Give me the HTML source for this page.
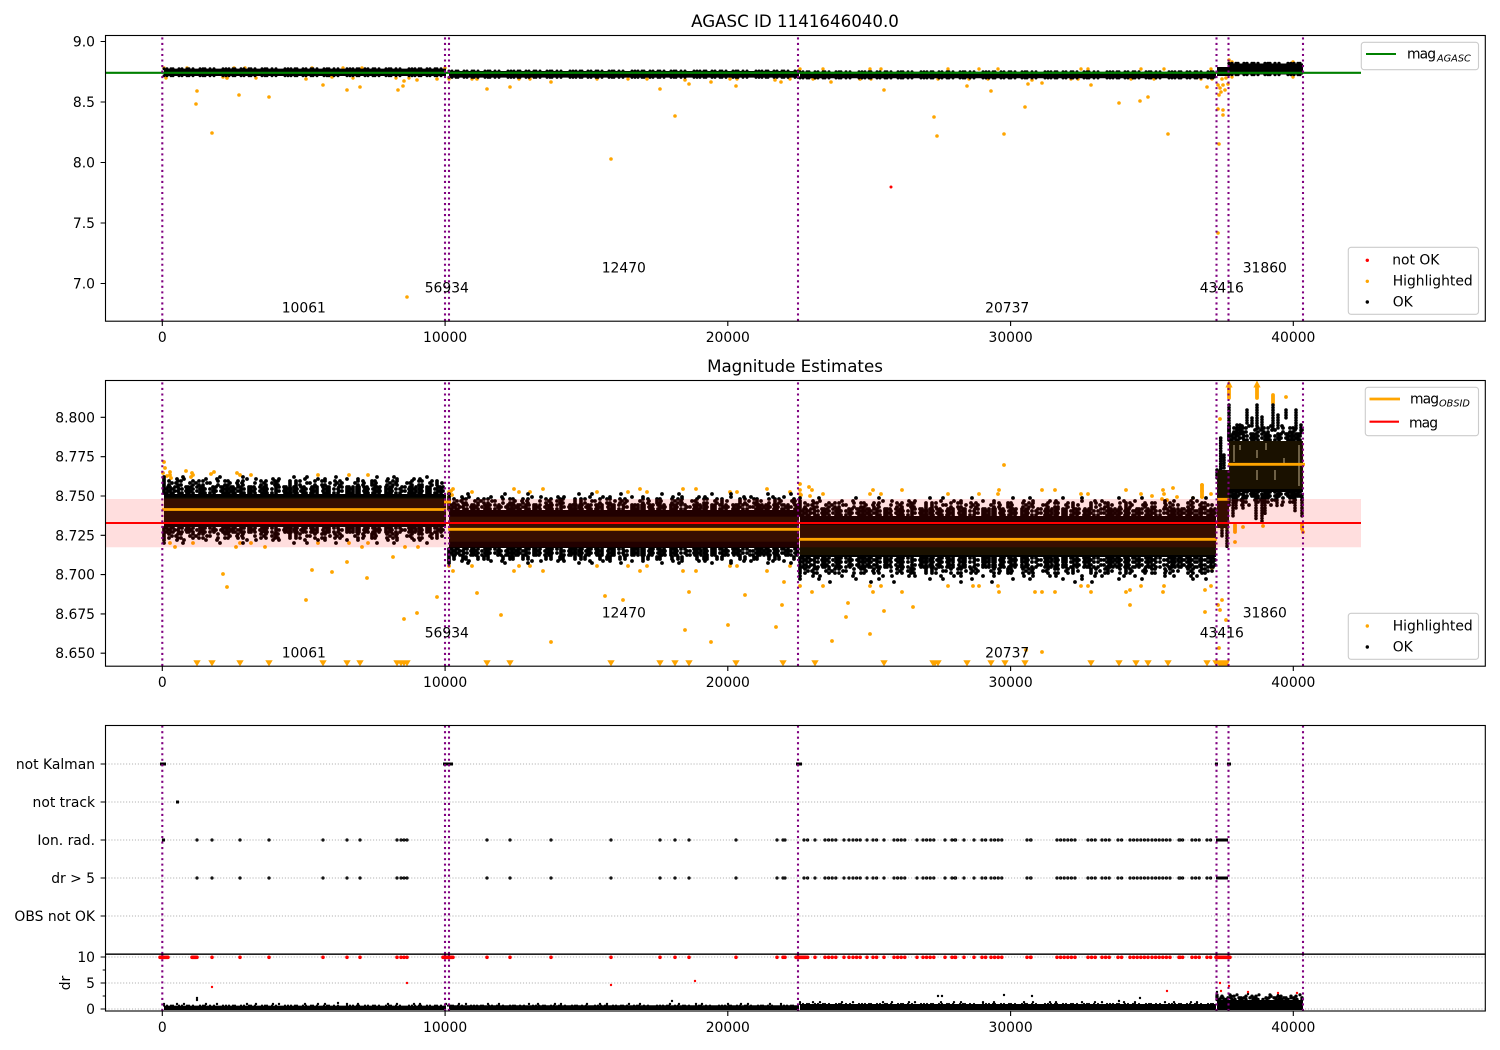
<!DOCTYPE html>
<html><head><meta charset="utf-8"><title>AGASC ID 1141646040.0</title>
<style>
html,body{margin:0;padding:0;background:#fff}
svg{display:block}
text{font-family:"DejaVu Sans",sans-serif;font-size:13.89px;fill:#000}
.t{font-size:16.67px;text-anchor:middle}
.s{font-size:9.72px;font-style:italic}
.q{letter-spacing:-.9px}
.r{text-anchor:end}.m{text-anchor:middle}
path,line{fill:none}
.f{fill:#ffa500;stroke:#ffa500;stroke-width:1}
.k{stroke:#000;stroke-linecap:round}
.b{stroke:#000}
.o{stroke:#ffa500;stroke-linecap:round}
.a{stroke-dasharray:0 3 0 4 0 2 0 6 0 3 0 5 0 2 0 4 0 7 0 3 0 2 0 5 0 4 0 9 0 3}
.a2{stroke-dasharray:0 4 0 2 0 5 0 3 0 8 0 2 0 3 0 6 0 4 0 2 0 10 0 3 0 5 0 2 0 4}
.b1{stroke-dasharray:0 5 0 9 0 3 0 12 0 6 0 4 0 15 0 7 0 3 0 10 0 5 0 18}
.b2{stroke-dasharray:0 8 0 4 0 14 0 6 0 11 0 3 0 20 0 7 0 5 0 13 0 9}
.c1{stroke-dasharray:0 13 0 7 0 22 0 11 0 30 0 9 0 17 0 6 0 26}
.c2{stroke-dasharray:0 19 0 37 0 23 0 51 0 13 0 29 0 41 0 17 0 33}
.e{stroke-dasharray:0 41 0 23 0 67 0 31 0 83 0 17 0 53}
.o1{stroke-dasharray:0 23 0 47 0 11 0 67 0 31 0 19 0 83 0 7 0 53}
.o2{stroke-dasharray:0 61 0 29 0 97 0 43 0 13 0 71 0 37}
.v{stroke:#800080;stroke-width:2.08;stroke-dasharray:2.08 3.44}
.g{stroke:#b0b0b0;stroke-width:1.11;stroke-dasharray:1.11 1.83}
.sp{fill:none;stroke:#000;stroke-width:1.11}
.tk{stroke:#000;stroke-width:1.11}
.lg{fill:#fff;fill-opacity:.8;stroke:#ccc;stroke-width:1.11}
.ch{stroke-dasharray:0 3.6}
.bd{stroke-dasharray:0 2.6}
</style></head><body>
<svg width="1500" height="1050" viewBox="0 0 1500 1050" xmlns="http://www.w3.org/2000/svg">
<defs>
<g id="ev" fill="none" stroke-linecap="round">
<path d="M197 0h0M212 0h0M240 0h0M269 0h0M323 0h0M347 0h0M360 0h0M397 0h0M401 0h0M404 0h0M407 0h0M487 0h0M510 0h0M551 0h0M611 0h0M660 0h0M675 0h0M689 0h0M736 0h0M777 0h0M783 0h0M785 0h0M815 0h0M844 0h0M849 0h0M867 0h0M884 0h0M917 0h0M945 0h0M955 0h0M964 0h0M974 0h0M1031 0h0M1180 0h0"/>
<path class="ch" d="M804 0H810M825 0H839M853 0H863M873 0H878M894 0H907M923 0H937M952 0H958M982 0H986M991 0H1005M1027 0H1034M1057 0H1075M1088 0H1097M1102 0H1112M1118 0H1125M1130 0H1148M1152 0H1172M1179 0H1186M1192 0H1202M1207 0H1212"/>
</g>
</defs>

<!-- PANEL 1 -->
<text class="t" x="795" y="27">AGASC ID 1141646040.0</text>
<path class="o" stroke-width="3.6" d="M197 91h0M196 104h0M212 133h0M239 95h0M269 97h0M306 79h0M323 85h0M347 90h0M360 87h0M398 90h0M403 86h0M404 81h0M417 80h0M437 79h0M487 89h0M223 77h0M227 78h0M332 77h0M477 79h0M407 297h0M510 87h0M551 82h0M611 159h0M660 89h0M675 116h0M685 80h0M689 84h0M711 82h0M736 86h0M775 80h0M781 82h0M815 78h0M831 82h0M860 79h0M884 90h0M934 117h0M937 136h0M967 86h0M991 91h0M1004 134h0M1025 107h0M1028 84h0M1032 80h0M1042 83h0M1091 85h0M1119 103h0M1140 101h0M1148 97h0M1168 134h0M1207 87h0M1219 144h0M1218 109h0M1223 110h0M1223 115h0M1221 92h0M1218 85h0M1223 85h0M1228 84h0M1222 79h0M1229 60h0M1218 233h0M1220 88h0M1225 90h0M1219 95h0M1226 78h0"/>
<path class="o o1" stroke-width="3.4" d="M164 68H446M449 79H1216M800 69H1216"/>
<path class="o o2" stroke-width="3.4" d="M166 78H446M1232 62H1300M1232 77H1300"/>
<path d="M164 72.3H446" stroke="#000" stroke-width="7.4"/>
<path d="M449 74.3H799" stroke="#000" stroke-width="6.6"/>
<path d="M800 75H1216" stroke="#000" stroke-width="6.6"/>
<path d="M1217 71.5H1229" stroke="#000" stroke-width="9"/>
<path d="M1229 69H1303" stroke="#000" stroke-width="11"/>
<path class="k a" stroke-width="3" d="M164 68.8H446M164 75.8H446M449 71H799M449 77.4H799M800 71.8H1216M800 78H1216"/>
<path class="k a" stroke-width="3.4" d="M1229 63.5H1303M1229 74.5H1303"/>
<path stroke="#008000" stroke-width="2.08" d="M105 72.8H1361"/>
<path class="k" style="stroke:#f00" stroke-width="3" d="M891 187h0"/>
<g class="v"><path d="M162.3 321V35.5M445 321V35.5M449 321V35.5M798 321V35.5M1216.5 321V35.5M1228.5 321V35.5M1303 321V35.5"/></g>
<rect class="sp" x="105.5" y="35.5" width="1379.8" height="285.7"/>
<g class="tk"><path d="M162.3 321v5M445.1 321v5M727.8 321v5M1010.6 321v5M1293.3 321v5M100.6 41.5h5M100.6 102h5M100.6 162.5h5M100.6 223h5M100.6 283.5h5"/></g>
<text class="r" x="95" y="46.5">9.0</text><text class="r" x="95" y="107">8.5</text><text class="r" x="95" y="167.5">8.0</text><text class="r" x="95" y="228">7.5</text><text class="r" x="95" y="288.5">7.0</text>
<text class="m" x="162.3" y="342">0</text><text class="m" x="445.1" y="342">10000</text><text class="m" x="727.8" y="342">20000</text><text class="m" x="1010.6" y="342">30000</text><text class="m" x="1293.3" y="342">40000</text>
<text class="m" x="303.8" y="312.5">10061</text><text class="m" x="446.8" y="292.5">56934</text><text class="m" x="623.8" y="272.5">12470</text><text class="m" x="1007.2" y="312.5">20737</text><text class="m" x="1221.8" y="292.5">43416</text><text class="m" x="1264.8" y="272.5">31860</text>
<rect class="lg" x="1361.3" y="42.3" width="117.2" height="27.4" rx="2.8"/>
<path stroke="#008000" stroke-width="2.08" d="M1366 54H1396"/>
<text class="q" x="1407" y="58.5">mag</text><text class="s" x="1437" y="61.5">AGASC</text>
<rect class="lg" x="1348.3" y="247.3" width="130.2" height="67" rx="2.8"/>
<circle cx="1367.3" cy="260.3" r="1.7" fill="#f00"/><circle cx="1367.3" cy="281.3" r="1.7" fill="#ffa500"/><circle cx="1367.3" cy="302" r="1.7" fill="#000"/>
<text x="1392.2" y="264.5">not OK</text><text x="1392.7" y="285.5">Highlighted</text><text x="1392.7" y="306.5">OK</text>

<!-- PANEL 2 -->
<text class="t" x="795" y="372">Magnitude Estimates</text>
<!-- orange points -->
<path class="o" stroke-width="3.8" d="M223 574h0M227 587h0M306 600h0M312 570h0M332 572h0M347 562h0M367 578h0M393 557h0M404 619h0M417 613h0M437 597h0M477 593h0M501 615h0M551 642h0M605 596h0M623 600h0M685 630h0M689 592h0M711 642h0M728 625h0M745 595h0M776 627h0M782 605h0M784 582h0M832 641h0M846 617h0M848 603h0M870 634h0M884 611h0M913 607h0M973 586h0M1004 465h0M1026 650h0M1042 652h0M1035 592h0M1091 592h0M1130 590h0M1130 605h0M1205 590h0M1212 568h0M1205 612h0M1219 648h0M164 462h0M165 468h0M163 473h0M167 476h0M170 472h0M171 478h0M186 471h0M192 473h0M191 477h0M211 474h0M214 472h0M237 473h0M1173 488h0M1177 497h0M1202 485h0M1202 491h0M1202 497h0M1152 496h0M1162 499h0M1167 500h0M1193 498h0M451 491h0M452 495h0M449 497h0M800 484h0M800 490h0M801 495h0M809 487h0M810 496h0M1220 419h0M1286 397h0M1243 527h0M1263 526h0M1303 532h0M1235 542h0M1220 610h0M1222 600h0M1226 620h0M1218 605h0"/>
<path class="o" stroke-width="3.8" d="M1229 388V398M1257 388V398M1273 395V403M1235 525V532M1302 525V529M1202 485V497"/>
<path class="f" d="M1226.2 387h5.6l-2.8-5.5zM1254.2 387h5.6l-2.8-5.5z"/>
<path class="f" d="M194.2 660.8h5.6l-2.8 4.6zM209.2 660.8h5.6l-2.8 4.6zM237.2 660.8h5.6l-2.8 4.6zM266.2 660.8h5.6l-2.8 4.6zM320.2 660.8h5.6l-2.8 4.6zM344.2 660.8h5.6l-2.8 4.6zM357.2 660.8h5.6l-2.8 4.6zM394.2 660.8h5.6l-2.8 4.6zM398.2 660.8h5.6l-2.8 4.6zM401.2 660.8h5.6l-2.8 4.6zM404.2 660.8h5.6l-2.8 4.6zM484.2 660.8h5.6l-2.8 4.6zM507.2 660.8h5.6l-2.8 4.6zM608.2 660.8h5.6l-2.8 4.6zM657.2 660.8h5.6l-2.8 4.6zM672.2 660.8h5.6l-2.8 4.6zM686.2 660.8h5.6l-2.8 4.6zM733.2 660.8h5.6l-2.8 4.6zM780.2 660.8h5.6l-2.8 4.6zM812.2 660.8h5.6l-2.8 4.6zM881.2 660.8h5.6l-2.8 4.6zM930.2 660.8h5.6l-2.8 4.6zM932.2 660.8h5.6l-2.8 4.6zM935.2 660.8h5.6l-2.8 4.6zM964.2 660.8h5.6l-2.8 4.6zM988.2 660.8h5.6l-2.8 4.6zM1002.2 660.8h5.6l-2.8 4.6zM1022.2 660.8h5.6l-2.8 4.6zM1088.2 660.8h5.6l-2.8 4.6zM1116.2 660.8h5.6l-2.8 4.6zM1133.2 660.8h5.6l-2.8 4.6zM1145.2 660.8h5.6l-2.8 4.6zM1165.2 660.8h5.6l-2.8 4.6zM1204.2 660.8h5.6l-2.8 4.6zM1213.2 660.8h5.6l-2.8 4.6zM1217 660.8h12l-2 4.6h-8z"/>
<path class="o o1" stroke-width="3.8" d="M170 475H446M170 543H446M449 492H799M449 566H799M800 494H1216M800 586H1216"/>
<path class="o o2" stroke-width="3.8" d="M175 547H446M453 489H799M453 571H799M812 490H1216M812 592H1216"/>
<!-- black scatter: seg 1 -->
<rect x="164" y="494" width="282" height="33" fill="#000"/>
<g class="k" stroke-width="3.8">
<path class="a" d="M164 493H446M164 528H446"/>
<path class="a2" d="M164 491H446M164 530H446"/>
<path class="a" d="M164 489H446M164 532H446"/>
<path class="a2" d="M164 487H446"/>
<path class="b1" d="M164 485H446M164 534H446"/>
<path class="b2" d="M164 483H446M164 536H446"/>
<path class="b1" d="M164 481H446M164 538H446"/>
<path class="c1" d="M164 479H446M164 540H446"/>
<path class="c2" d="M164 477H446M164 543H446"/>
<!-- seg 2 -->
<path class="a" d="M449 509H799M449 549H799"/>
<path class="a2" d="M449 507H799M449 551H799"/>
<path class="a" d="M449 505H799M449 553H799"/>
<path class="a2" d="M449 555H799"/>
<path class="b1" d="M449 503H799M449 557H799"/>
<path class="b2" d="M449 501H799"/>
<path class="b1" d="M449 499H799M449 559H799"/>
<path class="c1" d="M449 497H799M449 561H799"/>
<path class="c2" d="M449 494H799M449 563H799"/>
<!-- seg 3 -->
<path class="a" d="M800 515H1216M800 558H1216"/>
<path class="a2" d="M800 513H1216M800 560H1216"/>
<path class="a" d="M800 511H1216M800 562H1216"/>
<path class="a2" d="M800 509H1216M800 565H1216"/>
<path class="a" d="M800 567H1216"/>
<path class="b1" d="M800 507H1216M800 569H1216"/>
<path class="b2" d="M800 505H1216M800 571H1216"/>
<path class="b1" d="M800 503H1216M800 573H1216"/>
<path class="c1" d="M800 501H1216M800 576H1216"/>
<path class="c2" d="M800 498H1216M800 579H1216"/>
<path class="e" d="M830 582H1120"/>
<!-- seg 5 edges -->
<path class="a" d="M1229 440H1303M1229 492H1303"/>
<path class="a2" d="M1229 438H1303M1229 494H1303"/>
<path class="a" d="M1229 436H1303M1229 496H1303"/>
<path class="a2" d="M1229 434H1303"/>
<path class="b1" d="M1229 432H1303M1229 498H1303"/>
<path class="b2" d="M1229 430H1303M1229 500H1303"/>
<path class="b1" d="M1229 428H1303M1229 502H1303"/>
<path class="c1" d="M1229 426H1303M1229 505H1303"/>
</g>
<rect x="449" y="510" width="350" height="38" fill="#000"/>
<rect x="800" y="516" width="416" height="41" fill="#000"/>
<rect x="1217" y="470" width="12" height="58" fill="#000"/>
<path class="k bd" stroke-width="3.6" d="M1220.7 438V470M1224 455V470M1227 528V548M1222 528V538M1217 470V480"/>
<rect x="1229" y="441" width="74" height="51" fill="#000"/>
<path class="k bd" stroke-width="3.6" d="M1229 405V440M1237 425V435M1240 425V435M1247 410V425M1252 418V428M1257 405V430M1262 417V430M1273 405V430M1278 415V430M1286 410V418M1296 410V430M1301 425V435M1233 495V518M1236 495V510M1243 495V508M1256 495V520M1262 495V522M1265 495V515M1277 495V507M1295 495V512M1302 495V518"/>
<path stroke="#eadfc4" stroke-width=".8" d="M1234 445V462M1257 450V458M1257 470V480M1266 443V450M1284 458V464M1275 470V480M1240 445V450M1299 445V486"/>
<!-- orange alpha bands -->
<g fill="#ffa500" fill-opacity=".1">
<rect x="162" y="497.7" width="284" height="25.3"/>
<rect x="446" y="490" width="3" height="25"/>
<rect x="449" y="516.7" width="350" height="25"/>
<rect x="799.5" y="525" width="417.5" height="30"/>
<rect x="1217" y="470" width="12" height="60"/>
<rect x="1229" y="441" width="75" height="48"/>
</g>
<!-- pink band -->
<rect x="105" y="499" width="1256" height="48.3" fill="#f00" fill-opacity=".13"/>
<path stroke="#f00" stroke-width="2.08" d="M105 523H1361"/>
<path stroke="#ffa500" stroke-width="2.78" d="M162 509.5H446M444 502H451M448 529.3H800M799 539.3H1217M1217 499.3H1229.5M1228 464.3H1305"/>
<g class="v"><path d="M162.3 666V380.5M445 666V380.5M449 666V380.5M798 666V380.5M1216.5 666V380.5M1228.5 666V380.5M1303 666V380.5"/></g>
<rect class="sp" x="105.5" y="380.5" width="1379.8" height="285.7"/>
<g class="tk"><path d="M162.3 666v5M445.1 666v5M727.8 666v5M1010.6 666v5M1293.3 666v5M100.6 417.3h5M100.6 456.7h5M100.6 496h5M100.6 535.3h5M100.6 574.6h5M100.6 613.9h5M100.6 653.2h5"/></g>
<text class="r" x="95" y="422.3">8.800</text><text class="r" x="95" y="461.7">8.775</text><text class="r" x="95" y="501">8.750</text><text class="r" x="95" y="540.3">8.725</text><text class="r" x="95" y="579.6">8.700</text><text class="r" x="95" y="618.9">8.675</text><text class="r" x="95" y="658.2">8.650</text>
<text class="m" x="162.3" y="687">0</text><text class="m" x="445.1" y="687">10000</text><text class="m" x="727.8" y="687">20000</text><text class="m" x="1010.6" y="687">30000</text><text class="m" x="1293.3" y="687">40000</text>
<text class="m" x="303.8" y="657.5">10061</text><text class="m" x="446.8" y="637.5">56934</text><text class="m" x="623.8" y="617.5">12470</text><text class="m" x="1007.2" y="657.5">20737</text><text class="m" x="1221.8" y="637.5">43416</text><text class="m" x="1264.8" y="617.5">31860</text>
<rect class="lg" x="1365.3" y="387.3" width="113.2" height="48.4" rx="2.8"/>
<path stroke="#ffa500" stroke-width="2.78" d="M1369.5 399H1400"/>
<path stroke="#f00" stroke-width="2.08" d="M1369.5 421.7H1399"/>
<text class="q" x="1410" y="403.5">mag</text><text class="s" x="1439" y="406.3">OBSID</text><text class="q" x="1409" y="427.3">mag</text>
<rect class="lg" x="1348.3" y="613.3" width="130.2" height="46" rx="2.8"/>
<circle cx="1367.3" cy="626" r="1.7" fill="#ffa500"/><circle cx="1367.3" cy="647" r="1.7" fill="#000"/>
<text x="1392.7" y="630.5">Highlighted</text><text x="1392.7" y="651.5">OK</text>

<!-- PANEL 3 -->
<path class="g" d="M105.5 764H1485M105.5 802H1485M105.5 840H1485M105.5 878H1485M105.5 916H1485"/>
<use href="#ev" y="840" stroke="#000" stroke-width="3.2"/>
<use href="#ev" y="878" stroke="#000" stroke-width="3.2"/>
<use href="#ev" y="840" stroke="#777" stroke-width=".9"/>
<use href="#ev" y="878" stroke="#777" stroke-width=".9"/>
<path stroke="#000" stroke-width="3" d="M160 764H166M443 764H453M796 764H802M1215 764H1218M1227 764H1231M176 802H179M1216 840H1228M1216 878H1228M162 840H165"/>
<g class="v"><path d="M162.3 954V725.5M445 954V725.5M449 954V725.5M798 954V725.5M1216.5 954V725.5M1228.5 954V725.5M1303 954V725.5"/></g>
<rect class="sp" x="105.5" y="725.5" width="1379.8" height="228.5"/>
<g class="tk"><path d="M100.6 764h5M100.6 802h5M100.6 840h5M100.6 878h5M100.6 916h5"/></g>
<text class="r" x="95" y="769">not Kalman</text><text class="r" x="95" y="807">not track</text><text class="r" x="95" y="845">Ion. rad.</text><text class="r" x="95" y="883">dr &gt; 5</text><text class="r" x="95" y="921">OBS not OK</text>

<!-- PANEL 4 -->
<path class="g" d="M105.5 957H1485M105.5 983H1485M105.5 1009H1485"/>
<use href="#ev" y="957.3" stroke="#f00" stroke-width="3.6"/>
<path class="k" style="stroke:#f00" stroke-width="3.6" d="M160 957.3H168M443 957.3H453M796 957.3H806M1216 957.3H1230M192 957.3H196"/>
<path stroke="#000" stroke-width="4.4" d="M164 1007.8H446"/>
<path stroke="#000" stroke-width="4.8" d="M449 1007.6H799"/>
<path stroke="#000" stroke-width="6" d="M800 1007H1216"/>
<path class="k a" stroke-width="2.2" d="M164 1005.6H799M800 1004H1216"/>
<path class="k c1" stroke-width="2.4" d="M164 1004H799M800 1002.2H1216"/>
<rect x="1217" y="1000" width="86" height="10" fill="#000"/>
<path class="k a" stroke-width="3.4" d="M1217 999.5H1303"/>
<path class="k a2" stroke-width="3.4" d="M1217 997.8H1303"/>
<path class="k b1" stroke-width="3.4" d="M1217 996.2H1303"/>
<path class="k c1" stroke-width="3.2" d="M1217 994.8H1303"/>
<path class="k" stroke-width="2.4" d="M197 1000h0M197 998h0M942 996h0M938 996h0M1004 995h0M1032 996h0M1119 1001h0M1140 998h0M672 1001h0M338 1003h0M1217 992h0M1248 994h0M1278 995h0"/>
<path style="stroke:#f00" class="k" stroke-width="2.4" d="M212 987h0M407 983h0M611 985h0M695 981h0M1167 991h0M1220 983h0M1221 991h0M1229 986h0M1248 992h0M1278 993h0M1297 993h0"/>
<g class="v"><path d="M162.3 1011V954M445 1011V954M449 1011V954M798 1011V954M1216.5 1011V954M1228.5 1011V954M1303 1011V954"/></g>
<rect class="sp" x="105.5" y="954.3" width="1379.8" height="56.7"/>
<g class="tk"><path d="M162.3 1011v5M445.1 1011v5M727.8 1011v5M1010.6 1011v5M1293.3 1011v5M100.6 957h5M100.6 983h5M100.6 1009h5M102.7 970h3M102.7 996h3"/></g>
<text class="r" x="95" y="962">10</text><text class="r" x="95" y="988">5</text><text class="r" x="95" y="1014">0</text>
<text class="m" transform="translate(70 983) rotate(-90)">dr</text>
<text class="m" x="162.3" y="1032">0</text><text class="m" x="445.1" y="1032">10000</text><text class="m" x="727.8" y="1032">20000</text><text class="m" x="1010.6" y="1032">30000</text><text class="m" x="1293.3" y="1032">40000</text>
</svg>
</body></html>
